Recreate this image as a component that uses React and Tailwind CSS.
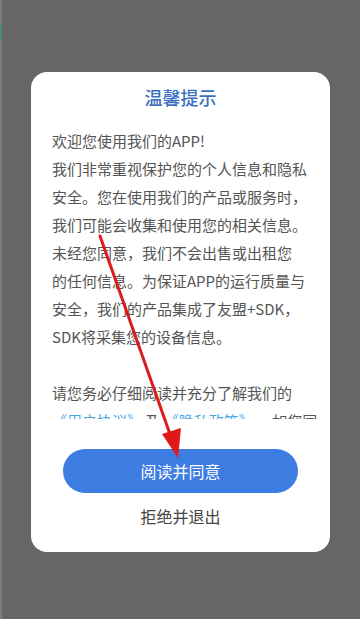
import React from "react";

const lines = [
  "我们非常重视保护您的个人信息和隐私",
  "安全。您在使用我们的产品或服务时，",
  "我们可能会收集和使用您的相关信息。",
  "未经您同意，我们不会出售或出租您",
  "的任何信息。为保证APP的运行质量与",
  "安全，我们的产品集成了友盟+SDK，",
  "SDK将采集您的设备信息。",
];

export default function App() {
  const font = { fontFamily: '"Noto Sans CJK SC", "Noto Sans", sans-serif' };
  return (
    <div className="relative w-[360px] h-[619px] overflow-hidden bg-[#666666] flex" style={font}>
      <div className="w-[2px] h-full bg-[#7c7c7c] flex flex-col">
        <div className="h-[24px]" />
        <div className="h-[18px] bg-[#4f8a70]" />
      </div>
      <div className="flex-1 pt-[72px] pl-[29px]">
        <div className="w-[299px] h-[480px] bg-white rounded-[16px] flex flex-col">
          <div className="pt-[13px] text-center text-[18px] leading-[24px] text-[#3b6fc2] font-medium">温馨提示</div>
          <div className="mt-[18px] h-[292px] overflow-hidden pl-[21px] pr-[10px] text-[15px] leading-[28px] text-[#555555] whitespace-nowrap">
            <p>欢迎您使用我们的APP!</p>
            {lines.map((l) => (
              <p key={l}>{l}</p>
            ))}
            <p className="h-[28px]"></p>
            <p>请您务必仔细阅读并充分了解我们的</p>
            <p>
              <span className="text-[#4aa6e0]">《用户协议》</span> 及 <span className="text-[#4aa6e0]">《隐私政策》</span> ，如您同
            </p>
          </div>
          <div className="mt-[30px] flex justify-center">
            <div className="w-[235px] h-[44px] rounded-full bg-[#3d7de2] text-white text-[16px] flex items-center justify-center">阅读并同意</div>
          </div>
          <div className="mt-[8px] text-center text-[16px] leading-[30px] text-[#444444]">拒绝并退出</div>
        </div>
      </div>
      <svg className="absolute left-0 top-0 pointer-events-none" width="360" height="619" viewBox="0 0 360 619">
        <line x1="100" y1="236" x2="171" y2="437" stroke="#d91c1c" strokeWidth="3" strokeLinecap="round" />
        <polygon points="178,458 162,434 181,428" fill="#e01818" />
      </svg>
    </div>
  );
}
